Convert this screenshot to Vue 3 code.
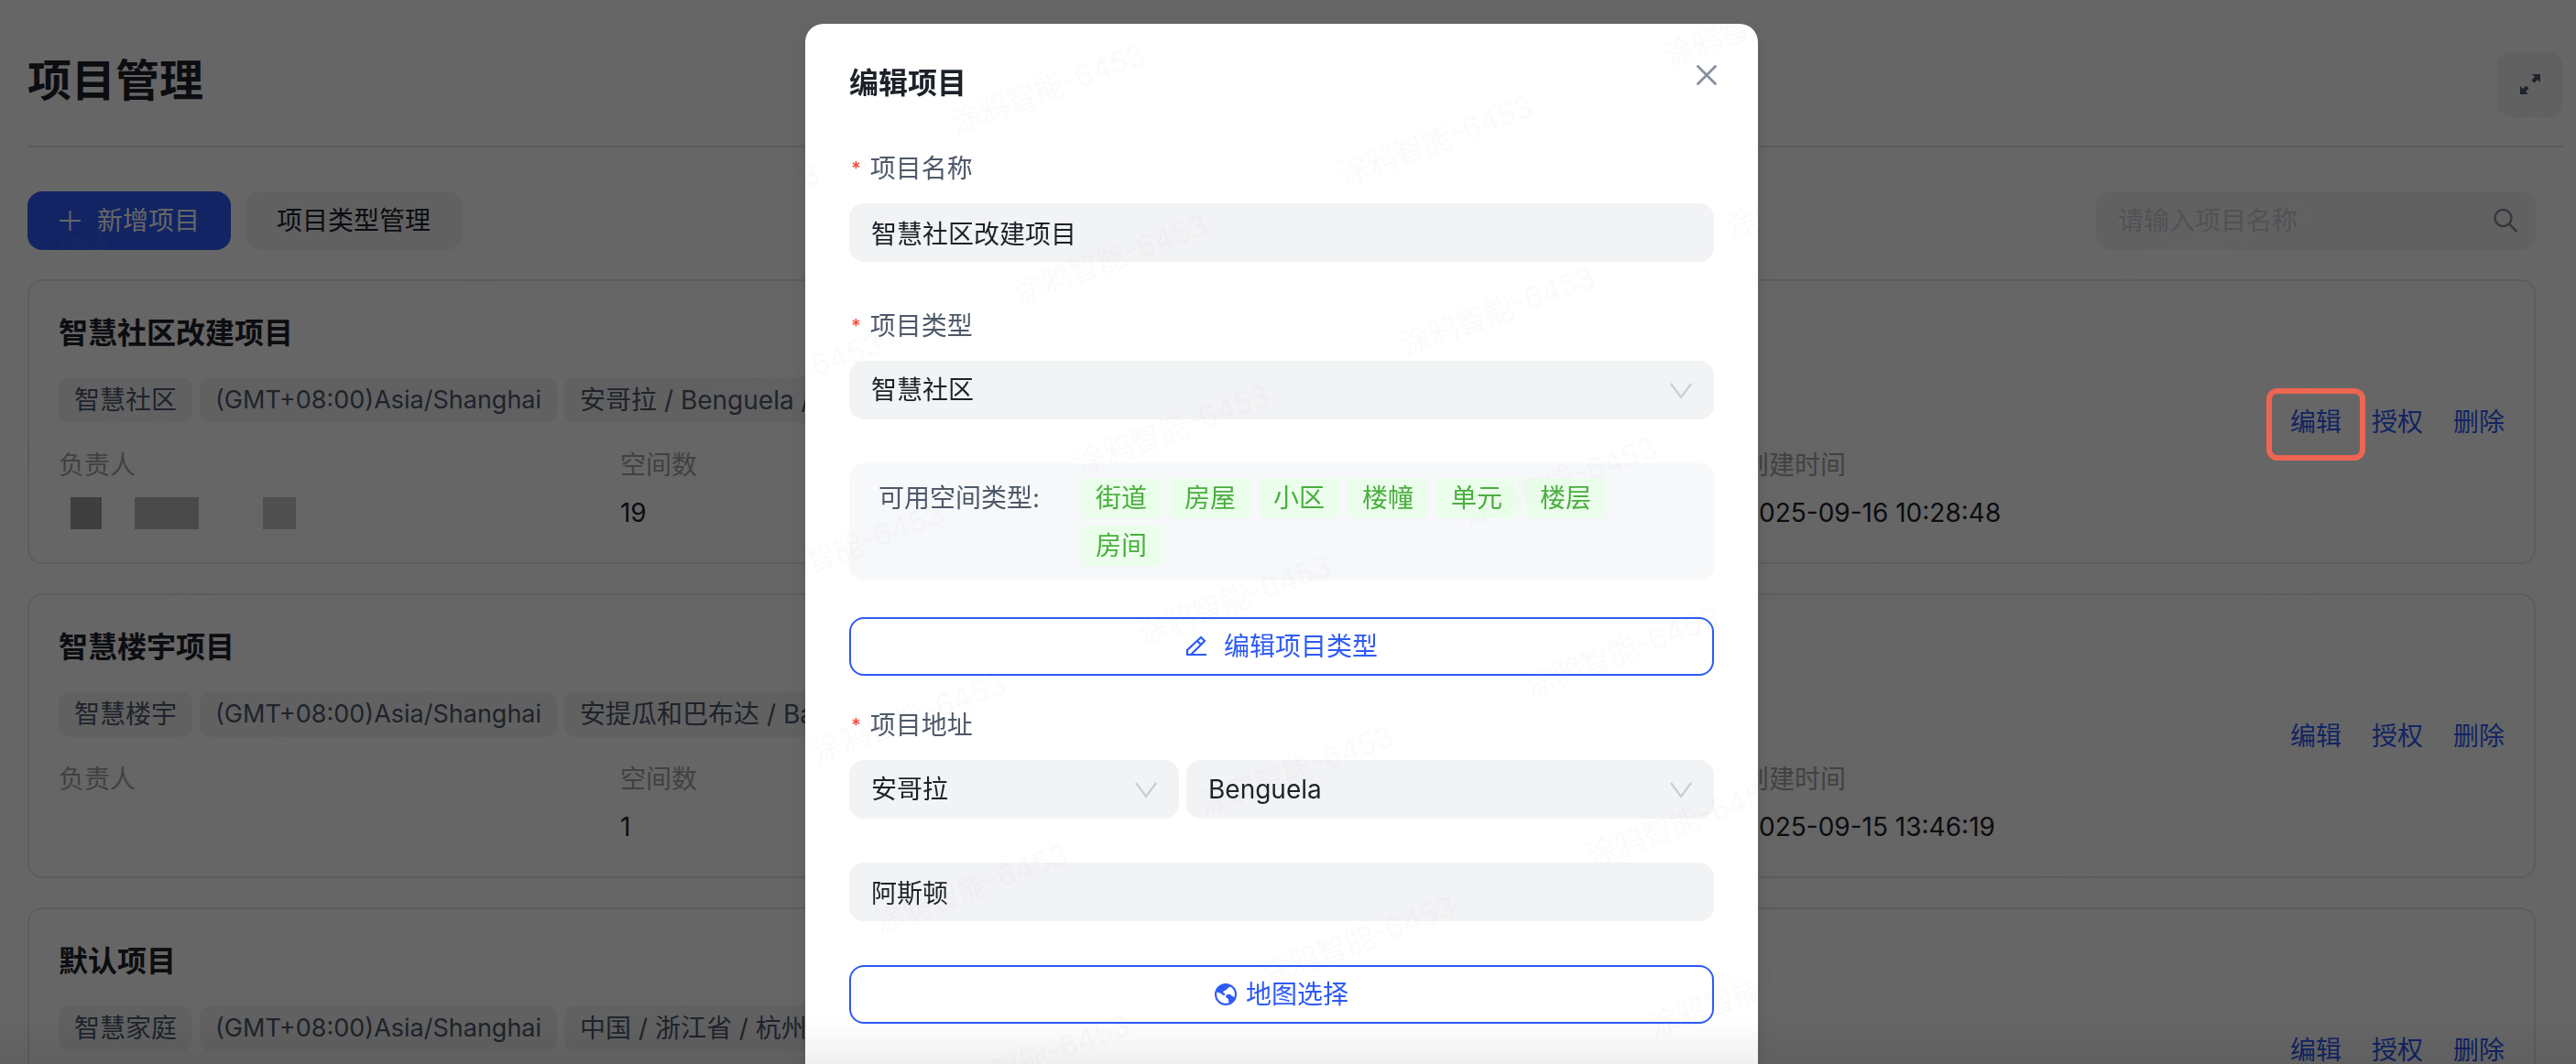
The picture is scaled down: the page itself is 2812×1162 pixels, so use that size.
<script setup>
import { ref } from 'vue';

const keyword = ref('');
const isOpen = ref(true);

const projects = ref([
  {
    id: 1,
    name: '智慧社区改建项目',
    type: '智慧社区',
    timezone: '(GMT+08:00)Asia/Shanghai',
    address: '安哥拉 / Benguela / 阿斯顿',
    masked: true,
    spaces: 19,
    createdAt: '2025-09-16 10:28:48',
  },
  {
    id: 2,
    name: '智慧楼宇项目',
    type: '智慧楼宇',
    timezone: '(GMT+08:00)Asia/Shanghai',
    address: '安提瓜和巴布达 / Barbuda',
    masked: false,
    spaces: 1,
    createdAt: '2025-09-15 13:46:19',
  },
  {
    id: 3,
    name: '默认项目',
    type: '智慧家庭',
    timezone: '(GMT+08:00)Asia/Shanghai',
    address: '中国 / 浙江省 / 杭州市',
    masked: false,
    spaces: 1,
    createdAt: '2025-09-15 13:46:19',
  },
]);

const form = ref({
  name: '智慧社区改建项目',
  type: '智慧社区',
  country: '安哥拉',
  city: 'Benguela',
  address: '阿斯顿',
});

const spaceTypes = ['街道', '房屋', '小区', '楼幢', '单元', '楼层', '房间'];

// Открыть окно редактирования
const openEdit = (project) => {
  form.value.name = project.name;
  form.value.type = project.type;
  isOpen.value = true;
};
</script>

<template>
  <div class="page">
    <header class="page-header">
      <h1>项目管理</h1>
      <button class="btn-expand" aria-label="全屏">
        <svg width="22" height="22" viewBox="0 0 22 22" fill="currentColor">
          <path d="M22 0H13L16 3L12.5 6.5L15.5 9.5L19 6L22 9Z" />
          <path d="M0 22V13L3 16L6.5 12.5L9.5 15.5L6 19L9 22Z" />
        </svg>
      </button>
    </header>

    <main class="content">
      <div class="toolbar">
        <button class="btn btn-primary">
          <svg width="24" height="24" viewBox="0 0 24 24" fill="none" stroke="currentColor" stroke-width="2">
            <path d="M1 12H24M12.5 1V23" />
          </svg>
          新增项目
        </button>
        <button class="btn btn-gray">项目类型管理</button>
        <label class="search">
          <input v-model="keyword" type="text" placeholder="请输入项目名称" aria-label="项目名称">
          <svg width="28" height="28" viewBox="0 0 28 28" fill="none" stroke="currentColor" stroke-width="2.6">
            <circle cx="12.5" cy="11" r="9" />
            <path d="M19 17.5L27.5 26" />
          </svg>
        </label>
      </div>

      <section v-for="(project, index) in projects" :key="project.id" class="card">
        <div class="card-info">
          <h2>{{ project.name }}</h2>
          <div class="tags">
            <span class="tag">{{ project.type }}</span>
            <span class="tag timezone">{{ project.timezone }}</span>
            <span class="tag">{{ project.address }}</span>
          </div>
          <div class="fields">
            <div class="field">
              <span class="field-label">负责人</span>
              <div class="field-value">
                <div v-if="project.masked" class="mosaic">
                  <i class="block dark"></i>
                  <i class="block wide"></i>
                  <i class="block light"></i>
                </div>
              </div>
            </div>
            <div class="field">
              <span class="field-label">空间数</span>
              <div class="field-value">{{ project.spaces }}</div>
            </div>
            <div class="field"></div>
            <div class="field">
              <span class="field-label">创建时间</span>
              <div class="field-value">{{ project.createdAt }}</div>
            </div>
          </div>
        </div>
        <div class="actions">
          <button :class="{ marked: index === 0 }" @click="openEdit(project)">编辑</button>
          <button>授权</button>
          <button>删除</button>
        </div>
      </section>
    </main>

    <div v-if="isOpen" class="overlay"></div>

    <div v-if="isOpen" class="modal-wrap">
      <form class="modal" @submit.prevent>
        <div class="modal-header">
          <h2>编辑项目</h2>
          <button type="button" class="btn-close" aria-label="关闭" @click="isOpen = false">
            <svg width="22" height="22" viewBox="0 0 22 22" fill="none" stroke="currentColor" stroke-width="2.8" stroke-linecap="round">
              <path d="M1.5 1.5L20.5 20.5M20.5 1.5L1.5 20.5" />
            </svg>
          </button>
        </div>

        <label class="label" for="project-name"><b>*</b>项目名称</label>
        <input id="project-name" v-model="form.name" class="control" type="text">

        <label class="label spaced" for="project-type"><b>*</b>项目类型</label>
        <div class="select">
          <select id="project-type" v-model="form.type" class="control">
            <option>智慧社区</option>
            <option>智慧楼宇</option>
            <option>智慧家庭</option>
          </select>
          <svg width="24" height="18" viewBox="0 0 24 18" fill="none" stroke="currentColor" stroke-width="2.2">
            <path d="M1 1L12 16L23 1" />
          </svg>
        </div>

        <div class="types">
          <span class="types-label">可用空间类型:</span>
          <div class="types-list">
            <span v-for="item in spaceTypes" :key="item" class="type">{{ item }}</span>
          </div>
        </div>

        <button type="button" class="btn btn-outline btn-types">
          <svg width="24" height="24" viewBox="0 0 24 24" fill="none" stroke="currentColor" stroke-width="2.2">
            <path d="M1 21H23M2 21V16L17 2L21 6L6 21M13 6L17 10" />
          </svg>
          编辑项目类型
        </button>

        <label class="label address" for="project-country"><b>*</b>项目地址</label>
        <div class="row">
          <div class="select country">
            <select id="project-country" v-model="form.country" class="control">
              <option>安哥拉</option>
              <option>中国</option>
            </select>
            <svg width="24" height="18" viewBox="0 0 24 18" fill="none" stroke="currentColor" stroke-width="2.2">
              <path d="M1 1L12 16L23 1" />
            </svg>
          </div>
          <div class="select city">
            <select v-model="form.city" class="control" aria-label="城市">
              <option>Benguela</option>
              <option>Luanda</option>
            </select>
            <svg width="24" height="18" viewBox="0 0 24 18" fill="none" stroke="currentColor" stroke-width="2.2">
              <path d="M1 1L12 16L23 1" />
            </svg>
          </div>
        </div>

        <input v-model="form.address" class="control spaced" type="text" aria-label="详细地址">

        <button type="button" class="btn btn-outline btn-map spaced">
          <svg width="24" height="24" viewBox="0 0 24 24">
            <circle cx="12" cy="12" r="11" fill="none" stroke="currentColor" stroke-width="2" />
            <path
              fill="currentColor"
              d="M2 9C3 5 6 2 11 1L17 2C17 4 16 5 14 5L13 7L10 8L9 10L11 11L11 13L9 13L7 11L4 10ZM13 12L17 12L19 14L22 15C21 18 19 21 16 22L15 19L15 17L12 15Z"
            />
          </svg>
          地图选择
        </button>
      </form>
    </div>

    <svg class="watermark" aria-hidden="true">
      <defs>
        <pattern id="wm" width="378" height="198" patternUnits="userSpaceOnUse" patternTransform="translate(972 65) rotate(-20)">
          <text x="40" y="100">涂鸦智能-6453</text>
        </pattern>
      </defs>
      <rect width="100%" height="100%" fill="url(#wm)" />
    </svg>
    <div class="fade"></div>
  </div>
</template>

<style>
body {
  margin: 0;
  overflow: hidden;
}
</style>

<style scoped>
.page {
  box-sizing: border-box;
  height: 100vh;
  padding-left: 30px;
  padding-right: 14px;
  overflow: hidden;
  background: #fff;
  color: #1d2129;
  font-family: Inter, "Noto Sans CJK SC", sans-serif;
  font-size: 28px;
  line-height: 44px;
}

.page *,
.page *::after {
  box-sizing: border-box;
}

h1,
h2 {
  margin: 0;
}

button,
input,
select {
  margin: 0;
  border: none;
  color: inherit;
  font: inherit;
}

button {
  padding: 0;
  background: none;
  cursor: pointer;
}

svg {
  flex: none;
}

.page-header {
  display: flex;
  align-items: flex-start;
  justify-content: space-between;
  padding: 56px 0 31px;
  border-bottom: 2px solid #e5e6eb;
}

.page-header h1 {
  font-size: 48px;
  font-weight: 600;
  line-height: 64px;
}

.btn-expand {
  display: flex;
  align-items: center;
  justify-content: center;
  width: 72px;
  height: 72px;
  border-radius: 16px;
  background: #f2f3f5;
  color: #4e5969;
}

.content {
  padding: 48px 30px 0 0;
}

.toolbar {
  display: flex;
  gap: 16px;
}

.btn {
  display: flex;
  align-items: center;
  justify-content: center;
  height: 64px;
  padding: 0 34px;
  border-radius: 16px;
}

.btn-primary {
  gap: 18px;
  background: #2d5af7;
  color: #fff;
}

.btn-gray {
  background: #f2f3f5;
}

.search {
  display: flex;
  align-items: center;
  width: 480px;
  height: 64px;
  margin-left: auto;
  padding: 0 20px 0 24px;
  border-radius: 16px;
  background: #f2f3f5;
  color: #86909c;
}

.search input {
  flex: 1;
  min-width: 0;
  padding: 0;
  outline: none;
  background: none;
}

.search input::placeholder {
  color: #c9cdd4;
  opacity: 1;
}

.card {
  display: flex;
  align-items: center;
  margin-top: 32px;
  padding: 32px;
  border: 2px solid #e5e6eb;
  border-radius: 16px;
}

.card-info {
  flex: 1;
  min-width: 0;
}

.card h2 {
  font-size: 32px;
  font-weight: 600;
  line-height: 50px;
}

.tags {
  display: flex;
  gap: 8px;
  margin: 23px 0 24px;
}

.tag {
  padding: 0 17px;
  border-radius: 12px;
  background: #f2f3f5;
  color: #4e5969;
  line-height: 50px;
  white-space: nowrap;
}

.timezone {
  font-size: 27px;
}

.fields {
  display: grid;
  grid-template-columns: repeat(4, 1fr);
  gap: 16px;
}

.field-label {
  color: #a3a3a3;
}

.field-value {
  height: 44px;
  margin-top: 8px;
}

.mosaic {
  display: flex;
  align-items: center;
  gap: 36px;
  height: 100%;
  padding-left: 13px;
}

.block {
  width: 34px;
  height: 35px;
}

.block.dark {
  background: #9e9e9e;
}

.block.wide {
  width: 70px;
  margin-right: 34px;
  background: #b9b9b9;
}

.block.light {
  width: 36px;
  background: #c6c6c6;
}

.actions {
  display: flex;
  gap: 33px;
  color: #2d5af7;
}

.marked {
  position: relative;
}

/* рамка поверх затемнения */
.marked::after {
  content: "";
  position: absolute;
  inset: -15px -26px -20px;
  z-index: 15;
  border: 6px solid #ee6552;
  border-radius: 12px;
}

.overlay {
  position: fixed;
  inset: 0;
  z-index: 10;
  background: rgba(0, 0, 0, 0.6);
}

.modal-wrap {
  position: fixed;
  inset: 0 14px 0 0;
  z-index: 20;
  display: flex;
  align-items: flex-start;
  justify-content: center;
  padding-top: 26px;
  overflow: hidden;
}

.modal {
  width: 100%;
  max-width: 1040px;
  min-height: 100vh;
  padding: 40px 48px;
  border-radius: 20px;
  background: #fff;
  box-shadow: 0 8px 20px rgba(0, 0, 0, 0.1);
}

.modal-header {
  display: flex;
  align-items: flex-start;
  justify-content: space-between;
  margin-bottom: 46px;
}

.modal-header h2 {
  font-size: 32px;
  font-weight: 600;
  line-height: 50px;
}

.btn-close {
  display: flex;
  align-items: center;
  justify-content: center;
  width: 32px;
  height: 32px;
  margin-right: -8px;
  color: #86909c;
}

.label {
  display: flex;
  align-items: center;
  gap: 10px;
  margin-bottom: 16px;
  padding-left: 2px;
  color: #4e5969;
}

.label b {
  color: #f5483b;
  font-size: 20px;
  font-weight: 600;
}

.spaced {
  margin-top: 48px;
}

.control {
  display: block;
  width: 100%;
  height: 64px;
  padding: 0 24px;
  border-radius: 16px;
  outline: none;
  appearance: none;
  background: #f2f3f5;
}

.select {
  position: relative;
}

.select svg {
  position: absolute;
  top: 24px;
  right: 24px;
  color: #c9cdd4;
  pointer-events: none;
}

.types {
  display: flex;
  margin: 48px 0 40px;
  padding: 16px 32px;
  border-radius: 16px;
  background: #f7f8fa;
}

.types-label {
  flex: none;
  width: 221px;
  color: #4e5969;
}

.types-list {
  display: flex;
  flex-wrap: wrap;
  gap: 8px 9px;
}

.type {
  padding: 0 16px;
  border-radius: 6px;
  background: #ebfeeb;
  color: #4aae3f;
}

.btn-outline {
  width: 100%;
  border: 2px solid #2d5af7;
  background: #fff;
  color: #2d5af7;
}

.btn-types {
  gap: 18px;
}

.btn-map {
  gap: 10px;
}

.address {
  margin-top: 32px;
}

.row {
  display: flex;
  gap: 8px;
}

.country {
  flex: 5;
}

.city {
  flex: 8;
}

.watermark {
  position: fixed;
  inset: 0;
  z-index: 30;
  width: 100%;
  height: 100%;
  pointer-events: none;
}

.watermark text {
  fill: rgba(140, 140, 140, 0.04);
  font-size: 32px;
}

.fade {
  position: fixed;
  inset: auto 0 0;
  z-index: 40;
  height: 50px;
  background: linear-gradient(rgba(0, 0, 0, 0), rgba(0, 0, 0, 0.06));
  pointer-events: none;
}
</style>
